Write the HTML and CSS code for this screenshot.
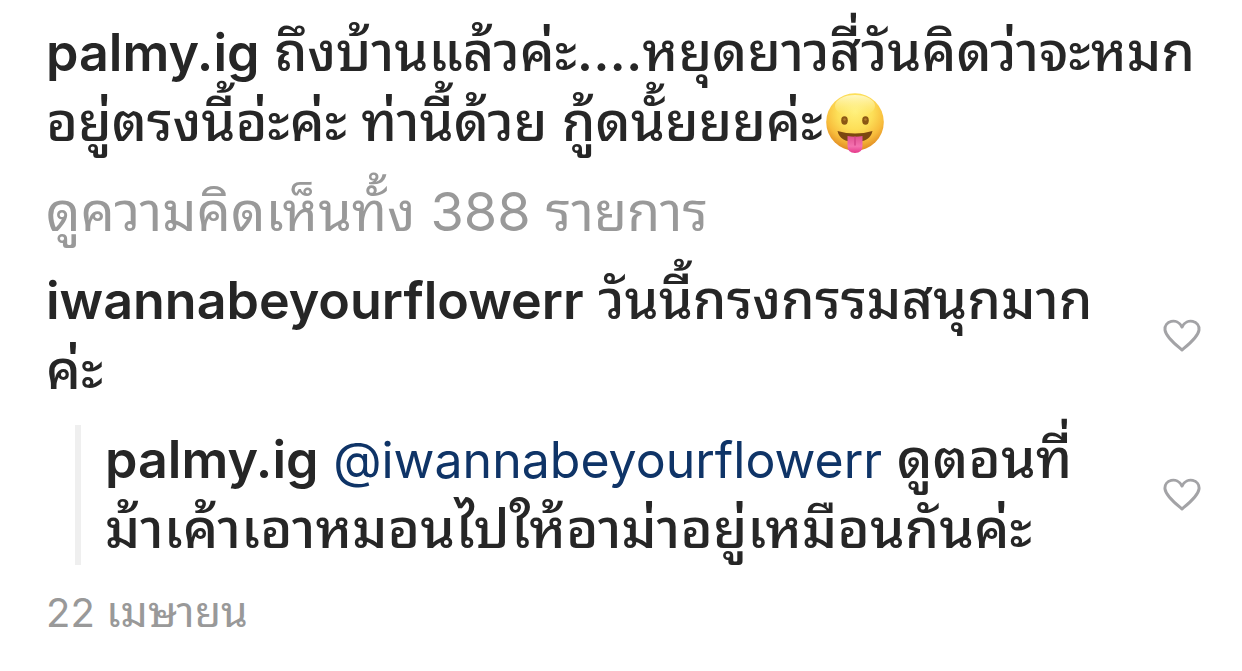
FILE: index.html
```
<!DOCTYPE html>
<html lang="th">
<head>
<meta charset="utf-8">
<meta name="viewport" content="width=device-width, initial-scale=1">
<title>palmy.ig</title>
<link rel="stylesheet" href="styles.css">
</head>
<body>
<main class="post">
  <p class="text caption"><a class="user" href="#">palmy.ig</a> <span class="thai">ถึงบ้านแล้วค่ะ....หยุดยาวสี่วันคิดว่าจะหมก<br>อยู่ตรงนี้อ่ะค่ะ ท่านี้ด้วย กู้ดนั้ยยยค่ะ</span><svg class="emoji" viewBox="0 0 60 60" role="img" aria-label="😛">
    <defs>
      <radialGradient id="face" cx="50%" cy="32%" r="68%"><stop offset="0" stop-color="#fff07a"/><stop offset=".45" stop-color="#fddf58"/><stop offset=".75" stop-color="#f8bd3c"/><stop offset="1" stop-color="#e08a22"/></radialGradient>
      <linearGradient id="shine" x1="0" y1="0" x2="0" y2="1"><stop offset="0" stop-color="#fffbd0" stop-opacity=".9"/><stop offset="1" stop-color="#fff07a" stop-opacity="0"/></linearGradient>
      <linearGradient id="tongue" x1="0" y1="0" x2="0" y2="1"><stop offset="0" stop-color="#e0508f"/><stop offset=".6" stop-color="#f472b0"/><stop offset="1" stop-color="#e5388a"/></linearGradient>
    </defs>
    <circle cx="30" cy="29" r="28.800" fill="url(#face)"/>
    <ellipse cx="30" cy="13" rx="20" ry="11" fill="url(#shine)"/>
    <ellipse cx="19.500" cy="27.500" rx="3.300" ry="4.200" fill="#8a5713"/><ellipse cx="40.500" cy="27.500" rx="3.300" ry="4.200" fill="#8a5713"/>
    <circle cx="19.500" cy="26.500" r="1.300" fill="#b07b2c"/><circle cx="40.500" cy="26.500" r="1.300" fill="#b07b2c"/>
    <path d="M12.500 38Q30 43 47.500 38Q45 49 30 49Q15 49 12.500 38Z" fill="#7c4710"/>
    <path d="M22.500 43Q30 44.500 37.500 43V53Q37.500 60 30 60Q22.500 60 22.500 53Z" fill="url(#tongue)"/><path d="M30 44V52" stroke="#d44489" stroke-width="1.500" stroke-linecap="round"/>
  </svg></p>
  <a class="text more" href="#">ดูความคิดเห็นทั้ง 388 รายการ</a>
  <article class="comment">
    <p class="text"><a class="user" href="#">iwannabeyourflowerr</a> <span class="thai">วันนี้กรงกรรมสนุกมาก<br>ค่ะ</span></p>
    <button class="like" type="button" aria-label="ถูกใจ"><svg viewBox="0 0 38 34"><path d="M19 31C17 29 3 19 2 11C1 2 14 -2 19 8C24 -2 37 2 36 11C35 19 21 29 19 31Z"/></svg></button>
  </article>
  <article class="comment reply">
    <p class="text"><a class="user" href="#">palmy.ig</a> <a class="mention" href="#">@iwannabeyourflowerr</a> <span class="thai">ดูตอนที่<br>ม้าเค้าเอาหมอนไปให้อาม่าอยู่เหมือนกันค่ะ</span></p>
    <button class="like" type="button" aria-label="ถูกใจ"><svg viewBox="0 0 38 34"><path d="M19 31C17 29 3 19 2 11C1 2 14 -2 19 8C24 -2 37 2 36 11C35 19 21 29 19 31Z"/></svg></button>
  </article>
  <time class="date">22 <span class="month">เมษายน</span></time>
</main>
</body>
</html>
```
FILE: styles.css
```
* { box-sizing: border-box; }
body { margin: 0; background: #fff; color: #262626; font-family: Inter, "Noto Sans Thai Looped", "Noto Looped Thai", Thonburi, Loma, Garuda, Waree, Umpush, "Noto Sans Thai", "Noto Sans", sans-serif; }
.post { display: flex; flex-direction: column; align-items: stretch; padding: 18px 41px 20px 46px; }
.text { margin: 0; font-size: 52px; line-height: 70px; white-space: nowrap; }
.thai { font-size: 54px; line-height: 60px; font-weight: 500; }
.reply .thai { font-size: 55px; }
a { color: inherit; text-decoration: none; }
.user { font-weight: 600; }
.emoji { width: 60px; height: 60px; margin-left: 2px; vertical-align: -12px; }
.more { color: #999; margin: 19px 0; font-size: 54px; }
.comment { display: flex; align-items: center; justify-content: space-between; }
.reply { margin: 19px 0 0 29px; padding-left: 24px; border-left: 6px solid #efefef; }
.mention { color: #0f3467; font-size: 50px; }
.like { flex: none; padding: 0; border: 0; background: none; width: 38px; height: 34px; }
.like svg { display: block; width: 38px; height: 34px; fill: none; stroke: #a3a3a6; stroke-width: 3; stroke-linejoin: round; }
.date { margin-top: 21px; font-size: 40px; line-height: 54px; color: #999; }
.month { font-size: 43px; line-height: 50px; }
```
